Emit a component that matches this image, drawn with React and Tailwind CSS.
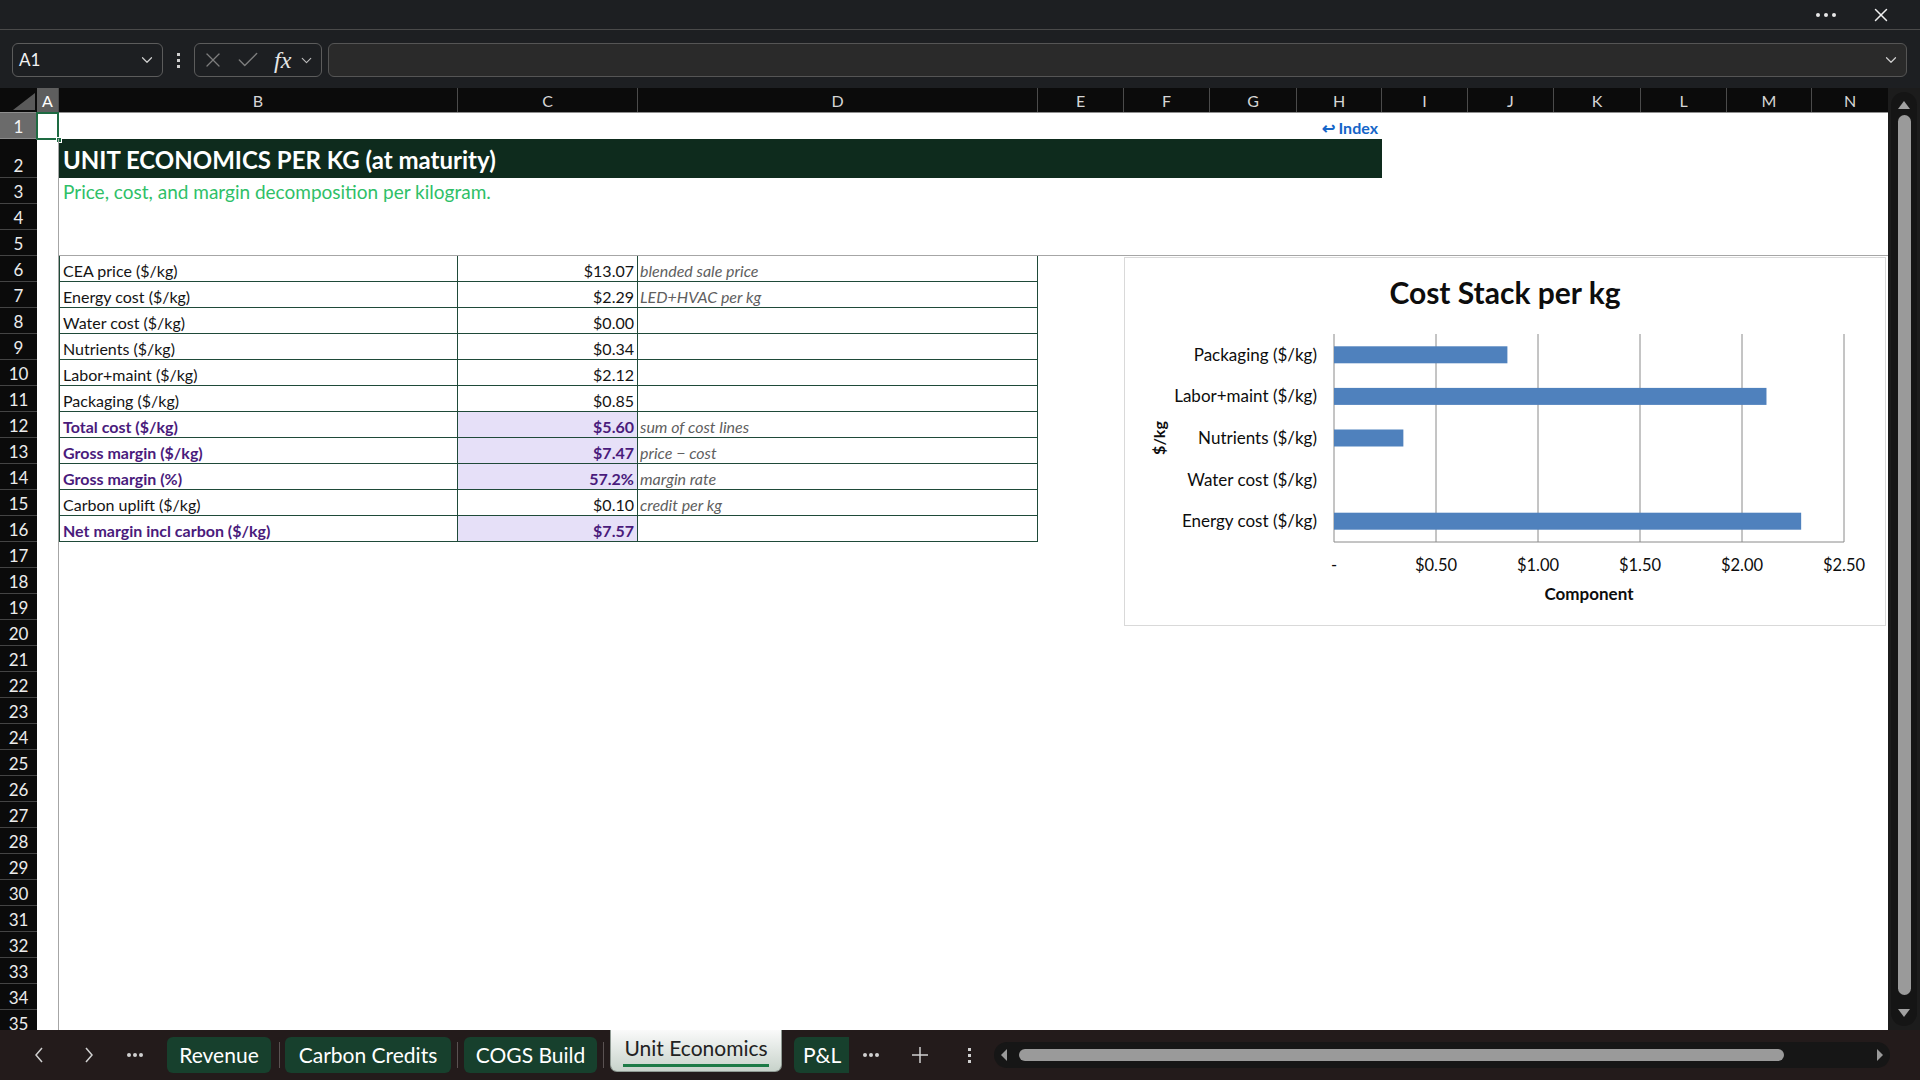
import { X, Check, ChevronDown } from 'lucide-react'

const COLS = [
  { k: 'A', w: 'w-[22px]' },
  { k: 'B', w: 'w-[399px]' },
  { k: 'C', w: 'w-[180px]' },
  { k: 'D', w: 'w-[400px]' },
  { k: 'E', w: 'w-[86px]' },
  { k: 'F', w: 'w-[86px]' },
  { k: 'G', w: 'w-[87px]' },
  { k: 'H', w: 'w-[85px]' },
  { k: 'I', w: 'w-[86px]' },
  { k: 'J', w: 'w-[86px]' },
  { k: 'K', w: 'w-[87px]' },
  { k: 'L', w: 'w-[86px]' },
  { k: 'M', w: 'w-[85px]' },
  { k: 'N', w: 'w-[76px]' },
]

const TABLE = {
  6: ['CEA price ($/kg)', '$13.07', 'blended sale price'],
  7: ['Energy cost ($/kg)', '$2.29', 'LED+HVAC per kg'],
  8: ['Water cost ($/kg)', '$0.00', ''],
  9: ['Nutrients ($/kg)', '$0.34', ''],
  10: ['Labor+maint ($/kg)', '$2.12', ''],
  11: ['Packaging ($/kg)', '$0.85', ''],
  12: ['Total cost ($/kg)', '$5.60', 'sum of cost lines', true],
  13: ['Gross margin ($/kg)', '$7.47', 'price − cost', true],
  14: ['Gross margin (%)', '57.2%', 'margin rate', true],
  15: ['Carbon uplift ($/kg)', '$0.10', 'credit per kg'],
  16: ['Net margin incl carbon ($/kg)', '$7.57', '', true],
}

const BARS = [
  ['Packaging ($/kg)', 0.85],
  ['Labor+maint ($/kg)', 2.12],
  ['Nutrients ($/kg)', 0.34],
  ['Water cost ($/kg)', 0],
  ['Energy cost ($/kg)', 2.29],
]

const ROWS = Array.from({ length: 35 }, (_, i) => i + 1)

function Dots() {
  return (
    <div className="flex items-center gap-[4px]">
      <span className="w-[4px] h-[4px] rounded-full bg-[#e8e8e8]" />
      <span className="w-[4px] h-[4px] rounded-full bg-[#e8e8e8]" />
      <span className="w-[4px] h-[4px] rounded-full bg-[#e8e8e8]" />
    </div>
  )
}

function VDots({ color = 'bg-[#d0d0d0]' }) {
  return (
    <div className="flex flex-col items-center gap-[3px]">
      <span className={`w-[3px] h-[3px] ${color}`} />
      <span className={`w-[3px] h-[3px] ${color}`} />
      <span className={`w-[3px] h-[3px] ${color}`} />
    </div>
  )
}

function FormulaBar() {
  return (
    <div className="h-[58px] shrink-0 flex items-start pt-[13px] pl-[12px]">
      <div className="w-[151px] h-[34px] rounded-[6px] border border-[#5c5c5c] flex items-center justify-between pl-[6px] pr-[6px] text-[17px] text-[#f2f2f2]">
        <span>A1</span>
        <ChevronDown size={18} strokeWidth={1.6} className="text-[#cfcfcf]" />
      </div>
      <div className="w-[31px] h-[34px] flex items-center justify-center">
        <VDots color="bg-[#cfcfcf]" />
      </div>
      <div className="w-[128px] h-[34px] rounded-[6px] border border-[#5c5c5c] flex items-center pl-[6px] text-[#7d7d7d]">
        <X size={24} strokeWidth={1.3} />
        <Check size={26} strokeWidth={1.3} className="ml-[10px]" />
        <span className="ml-[13px] text-[24px] italic text-[#e6e6e6] font-['Liberation_Serif',serif] leading-none">fx</span>
        <ChevronDown size={17} strokeWidth={1.6} className="ml-[7px] text-[#bdbdbd]" />
      </div>
      <div className="ml-[6px] w-[1579px] h-[34px] rounded-[6px] border border-[#555] bg-[#2a2a2a] flex items-center justify-end pr-[6px]">
        <ChevronDown size={18} strokeWidth={1.6} className="text-[#cfcfcf]" />
      </div>
    </div>
  )
}

function ColumnHeader() {
  return (
    <div className="h-[25px] shrink-0 flex bg-[#0b0b0b] border-b border-[#8f8f8f] text-[16px] text-[#d6d6d6]">
      <div className="w-[37px] shrink-0 flex items-end justify-end pr-[2px] pb-[2px]">
        <svg width="22" height="17" viewBox="0 0 22 17">
          <polygon points="22,0 22,17 0,17" fill="#5a5a5a" />
        </svg>
      </div>
      {COLS.map((c, i) => (
        <div
          key={c.k}
          className={`${c.w} shrink-0 flex items-center justify-center pt-[2px] ${i < COLS.length - 1 ? 'border-r border-[#4b4b4b]' : ''} ${c.k === 'A' ? 'bg-[#5e5e5e] text-white' : ''}`}
        >
          {c.k}
        </div>
      ))}
    </div>
  )
}

function RowHead({ n }) {
  const active = n === 1
  return (
    <div
      className={`w-[37px] shrink-0 flex justify-center border-b text-[17px] leading-[20px] ${n === 2 ? 'items-end pb-[1px]' : 'items-center pt-[3px]'} ${active ? 'bg-[#6b6b6b] text-[#f4f4f4] border-[#8a8a8a]' : 'bg-[#0b0b0b] text-[#ececec] border-[#444]'}`}
    >
      {n}
    </div>
  )
}

function RowBody({ n }) {
  if (n === 1) {
    return (
      <>
        <div className="w-[1323px] shrink-0 flex items-center justify-end pr-[4px] pt-[3px] text-[16px] font-bold text-[#1565c8]">
          ↩ Index
        </div>
        <div className="flex-1" />
      </>
    )
  }
  if (n === 2) {
    return (
      <>
        <div className="w-[1323px] shrink-0 bg-[#0e2b1d] flex items-center pl-[4px] pt-[3px] text-[24px] font-bold text-white whitespace-nowrap">
          UNIT ECONOMICS PER KG (at maturity)
        </div>
        <div className="flex-1" />
      </>
    )
  }
  if (n === 3) {
    return (
      <div className="flex-1 flex items-start pl-[4px] pt-[2px] text-[19px] leading-[24px] text-[#2fbf68] whitespace-nowrap">
        Price, cost, and margin decomposition per kilogram.
      </div>
    )
  }
  if (n === 5) {
    return <div className="flex-1 border-b border-[#a6a6a6]" />
  }
  const t = TABLE[n]
  if (t) {
    const [label, value, note, bold] = t
    return (
      <>
        <div
          className={`w-[399px] shrink-0 flex items-center pl-[3px] pt-[4px] border-l border-r border-b border-[#1f4a39] text-[16px] whitespace-nowrap ${bold ? 'font-bold text-[#4a1b7c]' : 'text-[#141414]'}`}
        >
          {label}
        </div>
        <div
          className={`w-[180px] shrink-0 flex items-center justify-end pr-[3px] pt-[4px] border-r border-b border-[#1f4a39] text-[16px] ${bold ? 'font-bold text-[#4a1b7c] bg-[#e6e0f8]' : 'text-[#141414]'}`}
        >
          {value}
        </div>
        <div className="w-[400px] shrink-0 flex items-center pl-[2px] pt-[4px] border-r border-b border-[#1f4a39] text-[16px] italic text-[#5f5f5f] whitespace-nowrap">
          {note}
        </div>
        <div className="flex-1" />
      </>
    )
  }
  return <div className="flex-1" />
}

function SheetRow({ n }) {
  return (
    <div className={`flex shrink-0 ${n === 2 ? 'h-[39px]' : 'h-[26px]'}`}>
      <RowHead n={n} />
      <div className="w-[22px] shrink-0 relative border-r border-[#a6a6a6]">
        {n === 1 && (
          <>
            <div className="absolute -left-[1px] -top-[1px] -right-[1px] -bottom-[1px] border-2 border-[#1e6b42]" />
            <div className="absolute -right-[4px] -bottom-[4px] w-[6px] h-[6px] bg-[#1e6b42] border border-white" />
          </>
        )}
      </div>
      <RowBody n={n} />
    </div>
  )
}

function Chart() {
  const x0 = 209
  const unit = 204
  const top = 76
  const band = 41.6
  return (
    <div className="absolute left-[1124px] top-[169px] w-[762px] h-[369px] bg-white border border-[#d9d9d9]">
      <svg width="760" height="367" viewBox="0 0 760 367" className="block" fontFamily="Lato, 'Liberation Sans', sans-serif">
        <text x="380" y="46" textAnchor="middle" fontSize="30" fontWeight="700" fill="#0d0d0d">
          Cost Stack per kg
        </text>
        {[0, 1, 2, 3, 4, 5].map(i => (
          <line key={i} x1={x0 + i * 102} y1={top} x2={x0 + i * 102} y2={284} stroke="#8a8a8a" strokeWidth="1" />
        ))}
        <line x1={x0} y1={284} x2={719} y2={284} stroke="#8a8a8a" strokeWidth="1" />
        {BARS.map(([label, v], i) => {
          const cy = top + band * i + band / 2
          return (
            <g key={label}>
              {v > 0 && <rect x={x0} y={cy - 8.5} width={v * unit} height={17} fill="#4f81bd" />}
              <text x="192" y={cy + 6} textAnchor="end" fontSize="17" fill="#0d0d0d">
                {label}
              </text>
            </g>
          )
        })}
        {['-', '$0.50', '$1.00', '$1.50', '$2.00', '$2.50'].map((l, i) => (
          <text key={l} x={x0 + i * 102} y="313" textAnchor="middle" fontSize="16.5" fill="#0d0d0d">
            {l}
          </text>
        ))}
        <text x="464" y="342" textAnchor="middle" fontSize="17" fontWeight="700" fill="#0d0d0d">
          Component
        </text>
        <text transform="translate(40,180) rotate(-90)" textAnchor="middle" fontSize="16" fontWeight="700" fill="#0d0d0d">
          $/kg
        </text>
      </svg>
    </div>
  )
}

function VScroll() {
  return (
    <div className="w-[32px] shrink-0 bg-[#1c1c1c] flex flex-col items-center pt-[4px] pb-[4px]">
      <div className="w-[26px] flex-1 rounded-full bg-[#151515] flex flex-col items-center pt-[8px] pb-[8px]">
        <svg width="14" height="10" viewBox="0 0 14 10">
          <polygon points="7,1 13,9 1,9" fill="#a0a0a0" />
        </svg>
        <div className="w-[13px] h-[880px] mt-[5px] rounded-full bg-[#9a9a9a]" />
        <div className="flex-1" />
        <svg width="14" height="10" viewBox="0 0 14 10">
          <polygon points="1,1 13,1 7,9" fill="#a0a0a0" />
        </svg>
      </div>
    </div>
  )
}

function Tab({ label, w }) {
  return (
    <div className={`${w} h-[36px] shrink-0 rounded-[6px] bg-[#17402d] flex items-center justify-center text-[21px] text-white whitespace-nowrap`}>
      {label}
    </div>
  )
}

function Divider() {
  return <div className="w-[1px] h-[26px] bg-[#5a5252] shrink-0" />
}

function BottomBar() {
  return (
    <div className="h-[50px] shrink-0 bg-[#231b1b] flex items-center text-[#d8d8d8] font-['Lato',sans-serif]">
      <div className="w-[24px] ml-[27px] flex justify-center">
        <svg width="10" height="18" viewBox="0 0 10 18"><polyline points="8,2 2,9 8,16" fill="none" stroke="#d0d0d0" strokeWidth="1.5" /></svg>
      </div>
      <div className="w-[24px] ml-[26px] flex justify-center">
        <svg width="10" height="18" viewBox="0 0 10 18"><polyline points="2,2 8,9 2,16" fill="none" stroke="#d0d0d0" strokeWidth="1.5" /></svg>
      </div>
      <div className="w-[24px] ml-[22px] flex justify-center">
        <div className="flex items-center gap-[2px]">
          <span className="w-[4px] h-[4px] rounded-full bg-[#d0d0d0]" />
          <span className="w-[4px] h-[4px] rounded-full bg-[#d0d0d0]" />
          <span className="w-[4px] h-[4px] rounded-full bg-[#d0d0d0]" />
        </div>
      </div>
      <div className="ml-[20px]"><Tab label="Revenue" w="w-[104px]" /></div>
      <div className="ml-[8px]"><Divider /></div>
      <div className="ml-[5px]"><Tab label="Carbon Credits" w="w-[166px]" /></div>
      <div className="ml-[6px]"><Divider /></div>
      <div className="ml-[6px]"><Tab label="COGS Build" w="w-[133px]" /></div>
      <div className="ml-[6px]"><Divider /></div>
      <div className="ml-[6px] self-start w-[172px] h-[42px] shrink-0 rounded-b-[7px] border border-t-0 border-[#8f9a93] bg-gradient-to-b from-[#fafafa] to-[#c8d3cb] flex flex-col items-center justify-end pb-[4px]">
        <span className="text-[21px] text-[#222] leading-[26px] whitespace-nowrap">Unit Economics</span>
        <span className="w-[146px] h-[3px] bg-[#1d7a46] mt-[3px]" />
      </div>
      <div className="ml-[12px] w-[55px] h-[36px] shrink-0 rounded-l-[6px] bg-[#17402d] flex items-center pl-[9px] text-[21px] text-white overflow-hidden whitespace-nowrap">
        P&amp;L
      </div>
      <div className="w-[24px] ml-[10px] flex justify-center">
        <div className="flex items-center gap-[2px]">
          <span className="w-[4px] h-[4px] rounded-full bg-[#d0d0d0]" />
          <span className="w-[4px] h-[4px] rounded-full bg-[#d0d0d0]" />
          <span className="w-[4px] h-[4px] rounded-full bg-[#d0d0d0]" />
        </div>
      </div>
      <div className="w-[24px] ml-[25px] flex justify-center">
        <svg width="18" height="18" viewBox="0 0 18 18"><path d="M9 1v16M1 9h16" stroke="#d0d0d0" strokeWidth="1.5" /></svg>
      </div>
      <div className="w-[24px] ml-[25px] flex justify-center">
        <VDots color="bg-[#d0d0d0]" />
      </div>
      <div className="ml-[13px] w-[896px] h-[26px] rounded-full bg-[#161616] flex items-center px-[6px]">
        <svg width="8" height="12" viewBox="0 0 8 12"><polygon points="7,0 7,12 1,6" fill="#9a9a9a" /></svg>
        <div className="ml-[11px] w-[765px] h-[12px] rounded-full bg-[#9a9a9a]" />
        <div className="flex-1" />
        <svg width="8" height="12" viewBox="0 0 8 12"><polygon points="1,0 1,12 7,6" fill="#9a9a9a" /></svg>
      </div>
    </div>
  )
}

export default function App() {
  return (
    <div className="w-[1920px] h-[1080px] overflow-hidden flex flex-col bg-[#1d1f22] font-['Lato','Liberation_Sans',sans-serif]">
      {/* title bar */}
      <div className="h-[30px] shrink-0 border-b border-[#4a4a4a] flex items-center justify-end pr-[28px] gap-[34px]">
        <Dots />
        <X size={22} strokeWidth={1.6} className="text-[#f0f0f0]" />
      </div>

      <FormulaBar />

      {/* grid */}
      <div className="flex-1 flex overflow-hidden">
        <div className="w-[1888px] shrink-0 relative flex flex-col bg-white overflow-hidden">
          <ColumnHeader />
          {ROWS.map(n => (
            <SheetRow key={n} n={n} />
          ))}
          <Chart />
        </div>
        <VScroll />
      </div>

      <BottomBar />
    </div>
  )
}
